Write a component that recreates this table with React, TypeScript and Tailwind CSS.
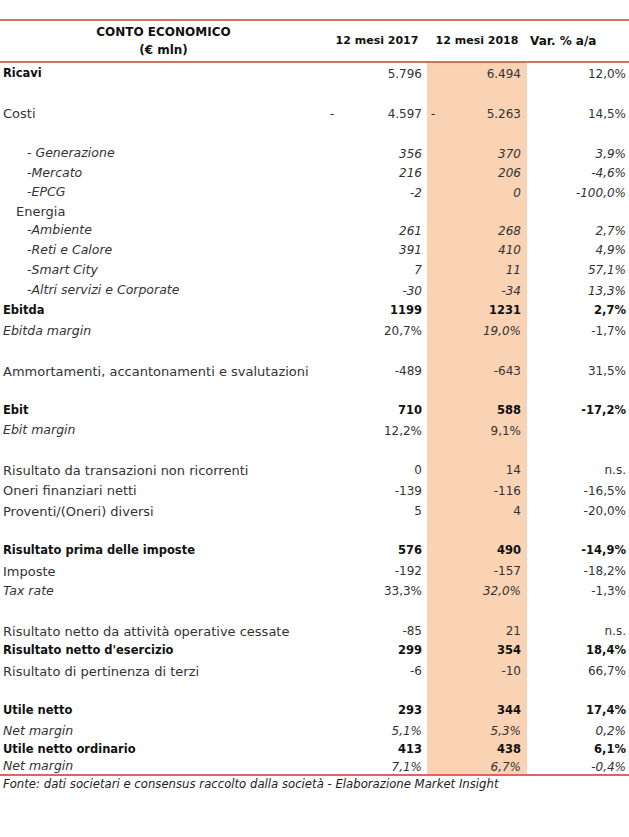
import React from "react";

type Row = {
  label?: string;
  indent?: 0 | 1 | 2;
  lb?: boolean;
  li?: boolean;
  v17?: string;
  v18?: string;
  vv?: string;
  nb?: boolean;
  ni?: boolean;
  i18?: boolean;
  dash?: boolean;
  h: number;
};

const heights: Record<number, string> = {
  15: "h-[15px]",
  18: "h-[18px]",
  19: "h-[19px]",
  20: "h-[20px]",
  21: "h-[21px]",
};

const indents = ["pl-[3px]", "pl-[16px]", "pl-[27px]"];

const rows: Row[] = [
  { label: "Ricavi", lb: true, v17: "5.796", v18: "6.494", vv: "12,0%", h: 21 },
  { h: 20 },
  { label: "Costi", v17: "4.597", v18: "5.263", vv: "14,5%", dash: true, h: 19 },
  { h: 21 },
  { label: "- Generazione", indent: 2, li: true, v17: "356", v18: "370", vv: "3,9%", ni: true, h: 19 },
  { label: "-Mercato", indent: 2, li: true, v17: "216", v18: "206", vv: "-4,6%", ni: true, h: 20 },
  { label: "-EPCG", indent: 2, li: true, v17: "-2", v18: "0", vv: "-100,0%", ni: true, h: 19 },
  { label: "Energia", indent: 1, h: 19 },
  { label: "-Ambiente", indent: 2, li: true, v17: "261", v18: "268", vv: "2,7%", ni: true, h: 19 },
  { label: "-Reti e Calore", indent: 2, li: true, v17: "391", v18: "410", vv: "4,9%", ni: true, h: 20 },
  { label: "-Smart City", indent: 2, li: true, v17: "7", v18: "11", vv: "57,1%", ni: true, h: 20 },
  { label: "-Altri servizi e Corporate", indent: 2, li: true, v17: "-30", v18: "-34", vv: "13,3%", ni: true, h: 21 },
  { label: "Ebitda", lb: true, v17: "1199", v18: "1231", vv: "2,7%", nb: true, h: 20 },
  { label: "Ebitda margin", li: true, v17: "20,7%", v18: "19,0%", vv: "-1,7%", i18: true, h: 20 },
  { h: 20 },
  { label: "Ammortamenti, accantonamenti e svalutazioni", v17: "-489", v18: "-643", vv: "31,5%", h: 20 },
  { h: 20 },
  { label: "Ebit", lb: true, v17: "710", v18: "588", vv: "-17,2%", nb: true, h: 20 },
  { label: "Ebit margin", li: true, v17: "12,2%", v18: "9,1%", h: 19 },
  { h: 20 },
  { label: "Risultato da transazioni non ricorrenti", v17: "0", v18: "14", vv: "n.s.", h: 20 },
  { label: "Oneri finanziari netti", v17: "-139", v18: "-116", vv: "-16,5%", h: 21 },
  { label: "Proventi/(Oneri) diversi", v17: "5", v18: "4", vv: "-20,0%", h: 20 },
  { h: 20 },
  { label: "Risultato prima delle imposte", lb: true, v17: "576", v18: "490", vv: "-14,9%", nb: true, h: 20 },
  { label: "Imposte", v17: "-192", v18: "-157", vv: "-18,2%", h: 20 },
  { label: "Tax rate", li: true, v17: "33,3%", v18: "32,0%", vv: "-1,3%", i18: true, h: 20 },
  { h: 20 },
  { label: "Risultato netto da attività operative cessate", v17: "-85", v18: "21", vv: "n.s.", h: 20 },
  { label: "Risultato netto d'esercizio", lb: true, v17: "299", v18: "354", vv: "18,4%", nb: true, h: 20 },
  { label: "Risultato di pertinenza di terzi", v17: "-6", v18: "-10", vv: "66,7%", h: 20 },
  { h: 20 },
  { label: "Utile netto", lb: true, v17: "293", v18: "344", vv: "17,4%", nb: true, h: 20 },
  { label: "Net margin", li: true, v17: "5,1%", v18: "5,3%", vv: "0,2%", ni: true, h: 20 },
  { label: "Utile netto ordinario", lb: true, v17: "413", v18: "438", vv: "6,1%", nb: true, h: 18 },
  { label: "Net margin", li: true, v17: "7,1%", v18: "6,7%", vv: "-0,4%", ni: true, h: 15 },
];

function num(r: Row, italic: boolean) {
  return r.nb
    ? "font-bold text-[11.5px] text-[#111]"
    : italic
      ? "italic text-[12px] text-[#333]"
      : "text-[12px] text-[#333]";
}

function TableRow({ r }: { r: Row }) {
  const labelCls = r.lb
    ? "font-bold text-[11.5px] text-[#111]"
    : r.li
      ? "italic text-[12.5px] text-[#333]"
      : "text-[13px] text-[#333]";
  return (
    <div className={`grid grid-cols-[327px_100px_100px_102px] ${heights[r.h]}`}>
      <div className={`flex items-center leading-none whitespace-nowrap ${indents[r.indent ?? 0]} ${labelCls}`}>
        {r.label}
      </div>
      <div className={`flex items-center justify-between leading-none pl-[3px] pr-[5px] ${num(r, !!r.ni)}`}>
        <span>{r.dash ? "-" : ""}</span>
        <span>{r.v17}</span>
      </div>
      <div className={`flex items-center justify-between leading-none bg-[#f9d3b4] pl-[4px] pr-[6px] ${num(r, !!r.ni || !!r.i18)}`}>
        <span>{r.dash ? "-" : ""}</span>
        <span>{r.v18}</span>
      </div>
      <div className={`flex items-center justify-end leading-none pr-[3px] ${num(r, !!r.ni)}`}>
        {r.vv}
      </div>
    </div>
  );
}

export default function App() {
  return (
    <div className="w-[629px] h-[837px] bg-white pt-[19px] font-['DejaVu_Sans',sans-serif]">
      <div className="border-t-2 border-b-2 border-[#cf7462] h-[44px] grid grid-cols-[327px_100px_100px_102px] font-bold text-[#111]">
        <div className="flex flex-col items-center justify-center text-[12px] leading-[18px]">
          <span>CONTO ECONOMICO</span>
          <span>(€ mln)</span>
        </div>
        <div className="flex items-center justify-center text-[11px]">12 mesi 2017</div>
        <div className="flex items-center justify-center text-[11px]">12 mesi 2018</div>
        <div className="flex items-center pl-[3px] text-[12px]">Var. % a/a</div>
      </div>
      {rows.map((r, i) => (
        <TableRow key={i} r={r} />
      ))}
      <div className="border-t-2 border-[#e06262] h-[20px] flex items-center pl-[3px] italic text-[11.7px] text-[#222] whitespace-nowrap">
        Fonte: dati societari e consensus raccolto dalla società - Elaborazione Market Insight
      </div>
    </div>
  );
}
